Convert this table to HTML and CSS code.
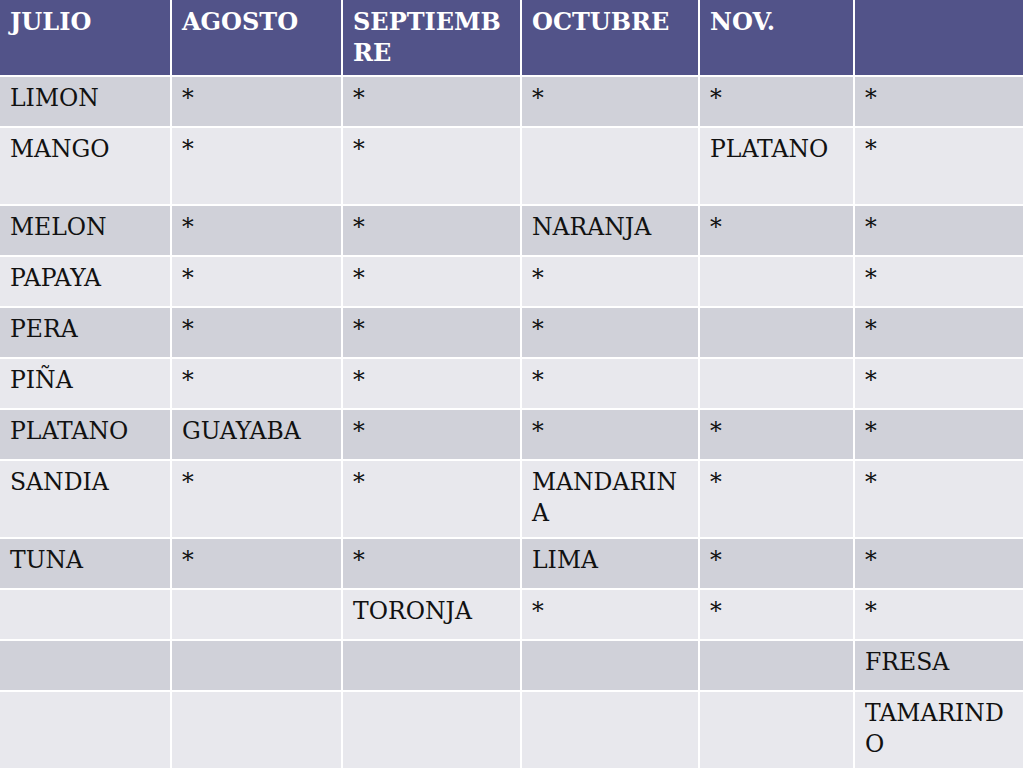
FILE: index.html
```html
<!DOCTYPE html>
<html lang="es">
<head>
<meta charset="utf-8">
<title>Frutas por mes</title>
<link rel="stylesheet" href="styles.css">
</head>
<body>
<div class="table">
  <div class="row head">
    <div class="cell">JULIO</div>
    <div class="cell">AGOSTO</div>
    <div class="cell">SEPTIEMB<br>RE</div>
    <div class="cell">OCTUBRE</div>
    <div class="cell">NOV.</div>
    <div class="cell"></div>
  </div>
  <div class="row dark">
    <div class="cell">LIMON</div>
    <div class="cell">*</div>
    <div class="cell">*</div>
    <div class="cell">*</div>
    <div class="cell">*</div>
    <div class="cell">*</div>
  </div>
  <div class="row light">
    <div class="cell">MANGO</div>
    <div class="cell">*</div>
    <div class="cell">*</div>
    <div class="cell"></div>
    <div class="cell">PLATANO</div>
    <div class="cell">*</div>
  </div>
  <div class="row dark">
    <div class="cell">MELON</div>
    <div class="cell">*</div>
    <div class="cell">*</div>
    <div class="cell">NARANJA</div>
    <div class="cell">*</div>
    <div class="cell">*</div>
  </div>
  <div class="row light">
    <div class="cell">PAPAYA</div>
    <div class="cell">*</div>
    <div class="cell">*</div>
    <div class="cell">*</div>
    <div class="cell"></div>
    <div class="cell">*</div>
  </div>
  <div class="row dark">
    <div class="cell">PERA</div>
    <div class="cell">*</div>
    <div class="cell">*</div>
    <div class="cell">*</div>
    <div class="cell"></div>
    <div class="cell">*</div>
  </div>
  <div class="row light">
    <div class="cell">PIÑA</div>
    <div class="cell">*</div>
    <div class="cell">*</div>
    <div class="cell">*</div>
    <div class="cell"></div>
    <div class="cell">*</div>
  </div>
  <div class="row dark">
    <div class="cell">PLATANO</div>
    <div class="cell">GUAYABA</div>
    <div class="cell">*</div>
    <div class="cell">*</div>
    <div class="cell">*</div>
    <div class="cell">*</div>
  </div>
  <div class="row light">
    <div class="cell">SANDIA</div>
    <div class="cell">*</div>
    <div class="cell">*</div>
    <div class="cell">MANDARIN<br>A</div>
    <div class="cell">*</div>
    <div class="cell">*</div>
  </div>
  <div class="row dark">
    <div class="cell">TUNA</div>
    <div class="cell">*</div>
    <div class="cell">*</div>
    <div class="cell">LIMA</div>
    <div class="cell">*</div>
    <div class="cell">*</div>
  </div>
  <div class="row light">
    <div class="cell"></div>
    <div class="cell"></div>
    <div class="cell">TORONJA</div>
    <div class="cell">*</div>
    <div class="cell">*</div>
    <div class="cell">*</div>
  </div>
  <div class="row dark">
    <div class="cell"></div>
    <div class="cell"></div>
    <div class="cell"></div>
    <div class="cell"></div>
    <div class="cell"></div>
    <div class="cell">FRESA</div>
  </div>
  <div class="row light">
    <div class="cell"></div>
    <div class="cell"></div>
    <div class="cell"></div>
    <div class="cell"></div>
    <div class="cell"></div>
    <div class="cell">TAMARIND<br>O</div>
  </div>
</div>
</body>
</html>
```
FILE: styles.css
```css
html, body {
  margin: 0;
  padding: 0;
  background: #ffffff;
}

body {
  width: 1024px;
  height: 768px;
  overflow: hidden;
  font-family: "DejaVu Serif", serif;
}

.table {
  display: grid;
  grid-template-columns: 170px 169px 177px 176px 153px 168px;
  grid-template-rows: 75px 49px 76px 49px 49px 49px 49px 49px 76px 49px 49px 49px 76px;
  gap: 2px;
  background: #ffffff;
  width: 1023px;
}

.row {
  display: contents;
}

.cell {
  padding: 6px 6px 0 10px;
  font-size: 23.5px;
  line-height: 31px;
  color: #111111;
  overflow: hidden;
  white-space: nowrap;
}

.head .cell {
  background: #525389;
  color: #ffffff;
  font-weight: bold;
  font-size: 24px;
}

.dark .cell {
  background: #d0d1d9;
}

.light .cell {
  background: #e8e8ed;
}
```
